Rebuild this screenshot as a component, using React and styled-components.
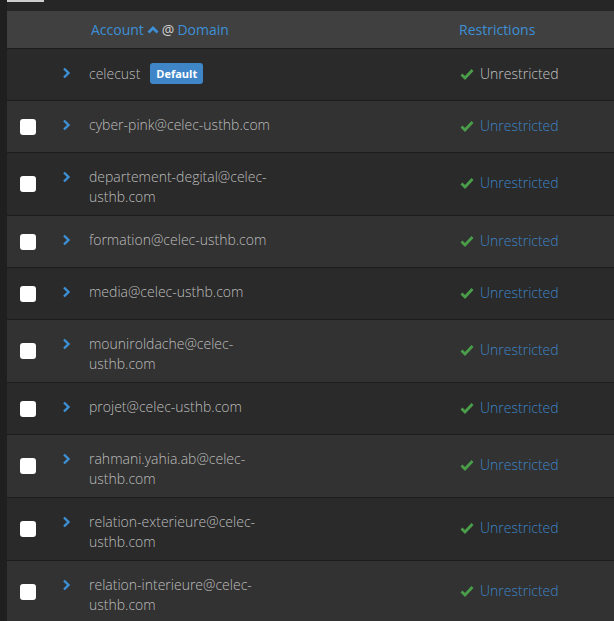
import styled, { createGlobalStyle } from "styled-components";

const GlobalStyle = createGlobalStyle`
  html, body {
    margin: 0;
    padding: 0;
    background: #1f1f1f;
    font-family: "Open Sans", "Liberation Sans", sans-serif;
    font-size: 14px;
    overflow: hidden;
  }
`;

const Page = styled.div`
  margin-left: 7px;
  background: #262626;
  min-height: 621px;
`;

const TopBar = styled.div`
  height: 11px;
`;

const ButtonEdge = styled.div`
  width: 37px;
  height: 2px;
  background: #cfcfcf;
`;

const HeaderRow = styled.div`
  display: grid;
  grid-template-columns: 48px 34px 370px 1fr;
  align-items: center;
  height: 37px;
  background: #404040;
  border-bottom: 1px solid #1c1c1c;
`;

const HeadCell = styled.div`
  grid-column: ${(p) => p.col};
  padding-left: ${(p) => p.pad || 0}px;
  color: #3d8fd6;
  line-height: 20px;
  display: flex;
  align-items: center;
  gap: 3px;
`;

const Muted = styled.span`
  color: #d0d0d0;
`;

const Row = styled.div`
  display: grid;
  grid-template-columns: 48px 34px 370px 1fr;
  align-items: center;
  min-height: 52px;
  box-sizing: border-box;
  background: ${(p) => (p.alt ? "#323232" : "#2a2a2a")};
  border-bottom: 1px solid #1c1c1c;
`;

const CheckCell = styled.div`
  padding-left: 13px;
  display: flex;
  align-items: center;
`;

const Checkbox = styled.span`
  width: 16px;
  height: 16px;
  border-radius: 3px;
  background: #fff;
  display: block;
`;

const ExpandCell = styled.div`
  align-self: start;
  padding-left: 7px;
  padding-top: 18px;
  display: flex;
`;

const AccountCell = styled.div`
  align-self: start;
  padding: 14px 0 8px;
  color: #bdbdbd;
  font-weight: 300;
  line-height: 20px;
  max-width: 190px;
  display: flex;
  align-items: center;
  gap: 10px;
`;

const Badge = styled.span`
  background: #3e86c8;
  color: #fff;
  font-size: 11px;
  font-weight: 700;
  border-radius: 3px;
  padding: 0 6px;
  line-height: 21px;
  white-space: nowrap;
`;

const RestrictCell = styled.div`
  display: flex;
  align-items: center;
  gap: 6px;
  padding: 0 0 2px 1px;
  line-height: 20px;
  font-weight: 300;
  color: ${(p) => (p.link ? "#3d84c6" : "#c4c4c4")};
`;

const Chevron = () => (
  <svg width="9" height="12" viewBox="0 0 9 12">
    <polyline points="2,1.5 6.5,6 2,10.5" fill="none" stroke="#3d8fd6" strokeWidth="2.4" />
  </svg>
);

const SortUp = () => (
  <svg width="12" height="9" viewBox="0 0 12 9">
    <polyline points="1.5,7.5 6,3 10.5,7.5" fill="none" stroke="#3d8fd6" strokeWidth="2.8" />
  </svg>
);

const Check = () => (
  <svg width="14" height="12" viewBox="0 0 14 12">
    <polyline points="1.5,6.5 5,10 12.5,2" fill="none" stroke="#4a9e4a" strokeWidth="2.8" />
  </svg>
);

const accounts = [
  "cyber-pink@celec-usthb.com",
  "departement-degital@celec-usthb.com",
  "formation@celec-usthb.com",
  "media@celec-usthb.com",
  "mouniroldache@celec-usthb.com",
  "projet@celec-usthb.com",
  "rahmani.yahia.ab@celec-usthb.com",
  "relation-exterieure@celec-usthb.com",
  "relation-interieure@celec-usthb.com",
];

const App = () => {
  return (
    <>
      <GlobalStyle />
      <Page>
        <TopBar>
          <ButtonEdge />
        </TopBar>
        <HeaderRow>
          <HeadCell col="3" pad="2">
            Account <SortUp /> <Muted>@</Muted> Domain
          </HeadCell>
          <HeadCell col="4">Restrictions</HeadCell>
        </HeaderRow>

        <Row>
          <CheckCell />
          <ExpandCell>
            <Chevron />
          </ExpandCell>
          <AccountCell>
            celecust <Badge>Default</Badge>
          </AccountCell>
          <RestrictCell>
            <Check /> Unrestricted
          </RestrictCell>
        </Row>

        {accounts.map((a, i) => (
          <Row key={a} alt={i % 2 === 0}>
            <CheckCell>
              <Checkbox />
            </CheckCell>
            <ExpandCell>
              <Chevron />
            </ExpandCell>
            <AccountCell>{a}</AccountCell>
            <RestrictCell link>
              <Check /> Unrestricted
            </RestrictCell>
          </Row>
        ))}
      </Page>
    </>
  );
};

export default App;
